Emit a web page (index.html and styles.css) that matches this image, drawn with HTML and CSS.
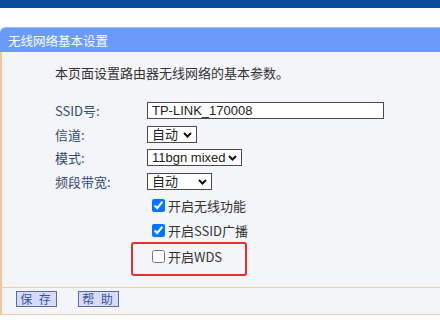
FILE: index.html
```html
<!DOCTYPE html>
<html lang="zh-CN">

<head>
    <meta charset="UTF-8">
    <meta name="viewport" content="width=device-width, initial-scale=1.0">
    <title>无线网络基本设置</title>
    <link rel="stylesheet" href="styles.css">
</head>

<body>

    <div class="topbar"></div>

    <!-- Panel -->
    <div class="panel">
        <div class="panel-title">无线网络基本设置</div>

        <div class="panel-body">
            <p class="intro">本页面设置路由器无线网络的基本参数。</p>

            <div class="form">
                <label class="label">SSID号:</label>
                <div><input class="field field-ssid" type="text" value="TP-LINK_170008"></div>

                <label class="label">信道:</label>
                <div class="select">
                    <select class="field sel-channel">
                        <option>自动</option>
                    </select>
                    <svg class="chev" width="9" height="6" viewBox="0 0 9 6"><path d="M1 1l3.5 3.5L8 1" fill="none" stroke="#111" stroke-width="2"/></svg>
                </div>

                <label class="label">模式:</label>
                <div class="select">
                    <select class="field sel-mode">
                        <option>11bgn mixed</option>
                    </select>
                    <svg class="chev" width="9" height="6" viewBox="0 0 9 6"><path d="M1 1l3.5 3.5L8 1" fill="none" stroke="#111" stroke-width="2"/></svg>
                </div>

                <label class="label">频段带宽:</label>
                <div class="select">
                    <select class="field sel-band">
                        <option>自动</option>
                    </select>
                    <svg class="chev" width="9" height="6" viewBox="0 0 9 6"><path d="M1 1l3.5 3.5L8 1" fill="none" stroke="#111" stroke-width="2"/></svg>
                </div>
            </div>

            <div class="checks">
                <label class="check"><input type="checkbox" checked>开启无线功能</label>
                <label class="check"><input type="checkbox" checked>开启SSID广播</label>
                <div class="mark">
                    <label class="check"><input type="checkbox">开启WDS</label>
                </div>
            </div>
        </div>

        <div class="panel-foot">
            <button class="btn">保 存</button>
            <button class="btn">帮 助</button>
        </div>
    </div>

</body>

</html>
```

FILE: styles.css
```css
body {
    margin: 0;
    background: #fff;
    font-family: "Noto Sans CJK SC", "Liberation Sans", sans-serif;
    font-size: 13px;
    color: #333;
}

.topbar {
    height: 8px;
    background: #0a4f9e;
    margin-bottom: 19px;
}

.panel {
    background: #f4f5f8;
}

.panel-title {
    height: 25px;
    line-height: 25px;
    padding-left: 8px;
    background: #6a9bfb;
    color: #fff;
    font-size: 12.5px;
    border-top-left-radius: 6px;
    border-top: 1px solid #9dbdf5;
    box-sizing: border-box;
}

.panel-body {
    border-left: 2px solid #f2c79a;
    padding: 13px 0 11px 53px;
}

.intro {
    margin: 0 0 21px;
    line-height: 16px;
}

.form {
    display: grid;
    grid-template-columns: 92px auto;
    grid-auto-rows: 17px;
    row-gap: 6.6px;
    align-items: center;
    justify-items: start;
}

.label {
    color: #33496e;
    line-height: 17px;
}

.field {
    height: 17px;
    box-sizing: border-box;
    margin: 0;
    font-family: "Liberation Sans", "Noto Sans CJK SC", sans-serif;
    font-size: 13px;
    color: #222;
    background: #fff;
    border: 1px solid #4a4a4a;
    border-radius: 0;
    display: block;
}

.field-ssid {
    width: 237px;
    padding: 0 4px;
}

.select {
    position: relative;
}

select.field {
    appearance: none;
    -webkit-appearance: none;
    padding: 0 0 0 4px;
    line-height: 15px;
}

.chev {
    position: absolute;
    right: 5px;
    top: 6px;
    pointer-events: none;
}

.sel-channel {
    width: 50px;
}

.sel-mode {
    width: 95px;
}

.sel-band {
    width: 65px;
}

.checks {
    display: flex;
    flex-direction: column;
    align-items: flex-start;
    padding-left: 97px;
    margin-top: 6px;
}

.check {
    display: flex;
    align-items: center;
    height: 20px;
    margin-bottom: 5px;
    color: #333;
}

.check input {
    width: 13px;
    height: 13px;
    margin: 0 3px 0 0;
}

.mark {
    margin: -4px 0 0 -21px;
    width: 116px;
    box-sizing: border-box;
    border: 2px solid #d9332c;
    border-radius: 3px;
    padding: 3px 0 7px 19px;
}

.mark .check {
    margin-bottom: 0;
}

.panel-foot {
    border-top: 1px solid #f0cda8;
    border-bottom: 1px solid #f0cda8;
    border-left: 2px solid #f2c79a;
    padding: 3px 0 7px 14px;
    display: flex;
    gap: 21px;
}

.btn {
    height: 16px;
    width: 41px;
    padding: 0;
    box-sizing: border-box;
    background: #d7dbf6;
    border: 1px solid #5a6b9e;
    color: #3a55a0;
    font-family: "Noto Sans CJK SC", sans-serif;
    font-size: 12px;
    line-height: 14px;
    letter-spacing: 2px;
    cursor: pointer;
}
```
